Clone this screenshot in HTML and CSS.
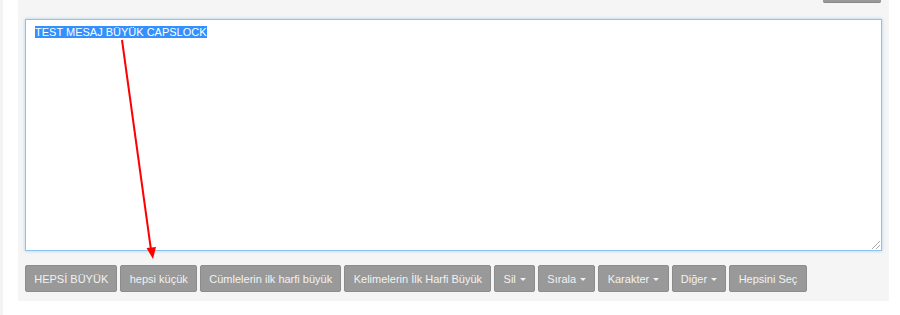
FILE: index.html
```html
<!DOCTYPE html>
<html lang="tr">

<head>
    <meta charset="UTF-8">
    <meta name="viewport" content="width=device-width, initial-scale=1.0">
    <title>Büyük Küçük Harf Çevirici</title>
    <link rel="stylesheet" href="styles.css">
</head>

<body>
    <div class="page">
        <div class="edge"></div>
        <div class="panel">
            <div class="topbar">
                <div class="top-btn"></div>
            </div>

            <div class="editor">
                <span class="selected">TEST MESAJ BÜYÜK CAPSLOCK</span>
                <div class="grip"></div>
            </div>

            <div class="toolbar">
                <button class="btn">HEPSİ BÜYÜK</button>
                <button class="btn">hepsi küçük</button>
                <button class="btn">Cümlelerin ilk harfi büyük</button>
                <button class="btn">Kelimelerin İlk Harfi Büyük</button>
                <button class="btn">Sil <span class="caret"></span></button>
                <button class="btn">Sırala <span class="caret"></span></button>
                <button class="btn">Karakter <span class="caret"></span></button>
                <button class="btn">Diğer <span class="caret"></span></button>
                <button class="btn">Hepsini Seç</button>
            </div>
        </div>
    </div>

    <!-- annotation arrow drawn over the page -->
    <svg class="arrow" width="900" height="315" viewBox="0 0 900 315">
        <line x1="122" y1="40" x2="151" y2="250" stroke="#f00" stroke-width="2" />
        <polygon points="146.5,248 156,247 153,259" fill="#f00" />
    </svg>
</body>

</html>
```

FILE: styles.css
```css
body {
    margin: 0;
    background: #fff;
    font-family: "Liberation Sans", Arial, sans-serif;
}

.page {
    display: flex;
    height: 315px;
}

.edge {
    width: 3px;
    background: #f3f3f3;
    margin-right: 15px;
}

.panel {
    width: 857px;
    height: 292px;
    padding: 0 7px 9px;
    background: #f5f5f5;
}

.topbar {
    display: flex;
    justify-content: flex-end;
    height: 2px;
    margin-bottom: 17px;
}

.top-btn {
    width: 58px;
    height: 2px;
    margin-right: 1px;
    background: #999;
    border-bottom: 1px solid #888;
    border-radius: 0 0 2px 2px;
}

.editor {
    position: relative;
    height: 221px;
    padding: 5px 9px 4px;
    background: #fff;
    border: 1px solid #8ec3ee;
    box-shadow: 0 0 3px rgba(102, 175, 233, 0.5);
    font-size: 11px;
    line-height: 14px;
}

.selected {
    background: #3390ff;
    color: #fff;
}

.grip {
    position: absolute;
    right: 1px;
    bottom: 1px;
    width: 8px;
    height: 8px;
    background: linear-gradient(135deg, transparent 45%, #aaa 45%, #aaa 52%, transparent 52%, transparent 70%, #aaa 70%, #aaa 77%, transparent 77%);
}

.toolbar {
    display: flex;
    gap: 3px;
    margin-top: 14px;
}

.btn {
    height: 27px;
    padding: 0 8.25px;
    background: #999;
    border: 1px solid #8c8c8c;
    border-radius: 2px;
    color: #f2f2f2;
    font-family: "Liberation Sans", Arial, sans-serif;
    font-size: 11px;
    cursor: pointer;
}

.caret {
    display: inline-block;
    width: 0;
    height: 0;
    margin-left: 1px;
    vertical-align: middle;
    border-top: 3px solid #f2f2f2;
    border-left: 3px solid transparent;
    border-right: 3px solid transparent;
}

.arrow {
    position: absolute;
    left: 0;
    top: 0;
    pointer-events: none;
}
```
